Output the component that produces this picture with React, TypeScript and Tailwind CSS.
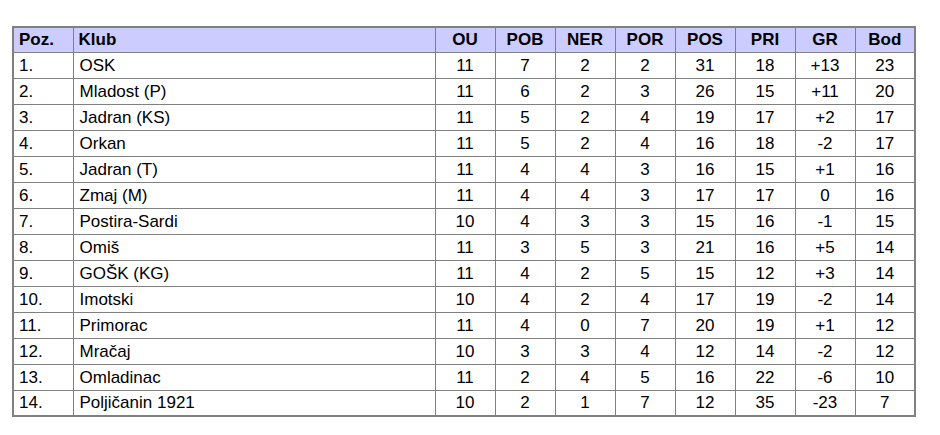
import React from "react";

const rows: (string | number)[][] = [
  ["1.", "OSK", 11, 7, 2, 2, 31, 18, "+13", 23],
  ["2.", "Mladost (P)", 11, 6, 2, 3, 26, 15, "+11", 20],
  ["3.", "Jadran (KS)", 11, 5, 2, 4, 19, 17, "+2", 17],
  ["4.", "Orkan", 11, 5, 2, 4, 16, 18, "-2", 17],
  ["5.", "Jadran (T)", 11, 4, 4, 3, 16, 15, "+1", 16],
  ["6.", "Zmaj (M)", 11, 4, 4, 3, 17, 17, "0", 16],
  ["7.", "Postira-Sardi", 10, 4, 3, 3, 15, 16, "-1", 15],
  ["8.", "Omiš", 11, 3, 5, 3, 21, 16, "+5", 14],
  ["9.", "GOŠK (KG)", 11, 4, 2, 5, 15, 12, "+3", 14],
  ["10.", "Imotski", 10, 4, 2, 4, 17, 19, "-2", 14],
  ["11.", "Primorac", 11, 4, 0, 7, 20, 19, "+1", 12],
  ["12.", "Mračaj", 10, 3, 3, 4, 12, 14, "-2", 12],
  ["13.", "Omladinac", 11, 2, 4, 5, 16, 22, "-6", 10],
  ["14.", "Poljičanin 1921", 10, 2, 1, 7, 12, 35, "-23", 7],
];

const heads = ["Poz.", "Klub", "OU", "POB", "NER", "POR", "POS", "PRI", "GR", "Bod"];

export default function App() {
  return (
    <div
      className="w-[940px] h-[435px] bg-white pt-[26px] pl-[12px]"
      style={{ fontFamily: '"Liberation Sans", Arial, sans-serif' }}
    >
      <table className="border-collapse border-2 border-[#808080] text-[17px] leading-none text-black w-[903px] table-fixed">
        <colgroup>
          <col className="w-[60px]" />
          <col className="w-[362px]" />
          <col className="w-[60px]" />
          <col className="w-[60px]" />
          <col className="w-[60px]" />
          <col className="w-[60px]" />
          <col className="w-[60px]" />
          <col className="w-[60px]" />
          <col className="w-[60px]" />
          <col className="w-[60px]" />
        </colgroup>
        <thead>
          <tr className="bg-[#ccccff] h-[25px]">
            {heads.map((h, i) => (
              <th
                key={h}
                className={`border border-[#808080] font-bold p-0 ${
                  i < 2 ? "text-left pl-[5px]" : "text-center"
                }`}
              >
                {h}
              </th>
            ))}
          </tr>
        </thead>
        <tbody>
          {rows.map((r) => (
            <tr key={r[0] as string} className="h-[26px]">
              {r.map((c, i) => (
                <td
                  key={i}
                  className={`border border-[#808080] p-0 ${
                    i === 0 ? "text-left pl-[5px]" : i === 1 ? "text-left pl-[6px]" : "text-center"
                  }`}
                >
                  {c}
                </td>
              ))}
            </tr>
          ))}
        </tbody>
      </table>
    </div>
  );
}
